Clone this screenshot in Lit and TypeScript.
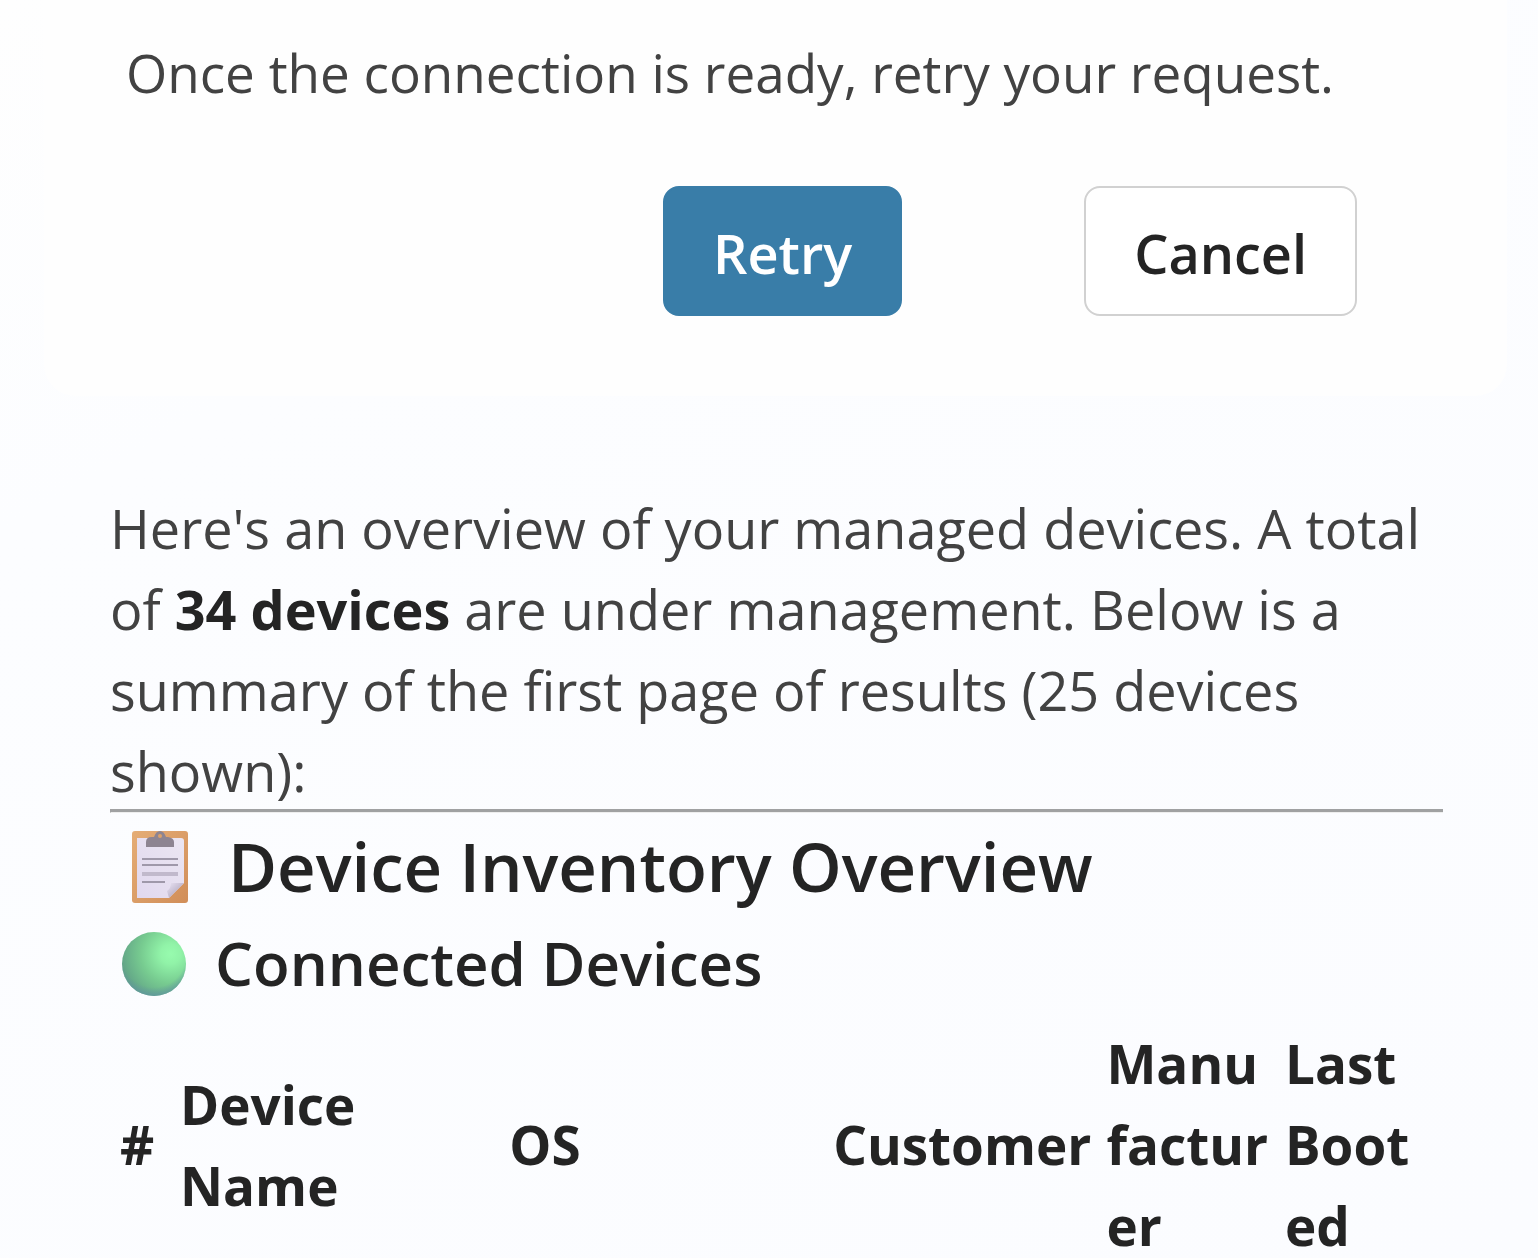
import { LitElement, html, css, svg } from "lit";
import { customElement } from "lit/decorators.js";

const clipboard = svg`
  <defs>
    <linearGradient id="board" x1="0" y1="0" x2="1" y2="1">
      <stop offset="0" stop-color="#e5ad76"/><stop offset="1" stop-color="#d18e59"/>
    </linearGradient>
    <linearGradient id="sheet" x1="1" y1="0" x2="0" y2="1">
      <stop offset="0" stop-color="#ebe6f2"/><stop offset="1" stop-color="#e1d8ef"/>
    </linearGradient>
    <linearGradient id="fold" x1="0.1" y1="0.1" x2="0.6" y2="0.6">
      <stop offset="0" stop-color="#e3dcee"/><stop offset="1" stop-color="#bdb4ca"/>
    </linearGradient>
  </defs>
  <rect x="0" y="0" width="56" height="72" rx="3" fill="url(#board)"/>
  <path d="M5 7H49Q52 7 52 10V52L37 67H5Z" fill="url(#sheet)"/>
  <path d="M35 60Q39 57 39 52H52L37 67Z" fill="url(#fold)"/>
  <path d="M14 16V11Q14 6 20 6H22Q24 0 28 0Q32 0 34 6H36Q42 7 42 11V16Z" fill="#8d8491"/>
  <circle cx="28" cy="5" r="2" fill="#dba069"/>
  <path d="M10 28H46M10 34H46M10 51H33" stroke="#9f98aa" stroke-width="2"/>
  <path d="M10 43H46" stroke="#c1b9cc" stroke-width="4"/>
`;

const greenBall = svg`
  <defs>
    <radialGradient id="ball" cx="0.76" cy="0.34" r="0.78">
      <stop offset="0" stop-color="#97fbae"/><stop offset="0.2" stop-color="#91f3a8"/>
      <stop offset="0.6" stop-color="#77cb90"/><stop offset="1" stop-color="#62a487"/>
    </radialGradient>
    <radialGradient id="shade" cx="0.5" cy="0.36" r="0.66">
      <stop offset="0.76" stop-color="#6095a0" stop-opacity="0"/>
      <stop offset="1" stop-color="#6095a0" stop-opacity="0.9"/>
    </radialGradient>
  </defs>
  <circle cx="32" cy="32" r="32" fill="url(#ball)"/>
  <circle cx="32" cy="32" r="32" fill="url(#shade)"/>
`;

@customElement("app-root")
export class AppRoot extends LitElement {
  static styles = css`
    :host {
      display: block;
      box-sizing: border-box;
      height: 100vh;
      overflow: hidden;
      background: linear-gradient(150deg, #fefefe 0%, #fcfdff 25%, #fbfcff 100%);
      color: #242424;
      font-family: "Open Sans", "Noto Sans", sans-serif;
      font-size: 54px;
      line-height: 81px;
    }
    * { box-sizing: border-box; }
    p, h2, h3 { margin: 0; }
    .card {
      margin: 0 31px 0 44px;
      padding: 32px 150px 80px 82px;
      background: #fefefe;
      border-radius: 0 0 32px 32px;
    }
    .note { color: #424242; font-size: 53px; white-space: nowrap; }
    .actions {
      display: flex;
      justify-content: flex-end;
      gap: 182px;
      margin-top: 73px;
    }
    button {
      height: 130px;
      padding: 4px 48px 0;
      border: 2px solid #d1d1d1;
      border-radius: 16px;
      background: #ffffff;
      color: #242424;
      font: inherit;
      font-weight: 600;
    }
    .primary {
      background: #397da8;
      border-color: #397da8;
      color: #ffffff;
    }
    .message { padding: 92px 95px 0 110px; }
    .summary { margin-bottom: -3px; color: #424242; }
    .summary strong { color: #242424; font-weight: 700; }
    hr {
      margin: 0;
      height: 4px;
      border: 0;
      border-top: 3px solid #a0a1a2;
      border-left: 1px solid #a0a1a2;
      border-bottom: 1px solid #eeeeee;
    }
    h2, h3 { display: flex; align-items: center; font-weight: 600; white-space: nowrap; }
    h2 { gap: 40px; padding-left: 22px; font-size: 67px; line-height: 107px; }
    h3 { gap: 29px; padding-left: 12px; font-size: 60px; line-height: 87px; }
    svg { display: block; flex: none; }
    .clip { width: 56px; height: 72px; }
    .ball { width: 64px; height: 64px; }
    table {
      width: 100%;
      margin-top: 16px;
      border-collapse: collapse;
      table-layout: fixed;
      font-size: 53px;
    }
    th {
      padding: 0 0 0 10px;
      text-align: left;
      vertical-align: middle;
      font-weight: 700;
    }
    .c-num { width: 4.5%; }
    .c-name { width: 24.7%; }
    .c-os { width: 24.3%; }
    .c-cust { width: 20.5%; }
    .c-manu { width: 13.4%; }
    .c-boot { width: 12.6%; }
  `;

  render() {
    return html`
      <section class="card">
        <p class="note">Once the connection is ready, retry your request.</p>
        <div class="actions">
          <button class="primary" type="button">Retry</button>
          <button type="button">Cancel</button>
        </div>
      </section>
      <article class="message">
        <p class="summary">
          Here's an overview of your managed devices. A total of
          <strong>34 devices</strong> are under management. Below is a summary
          of the first page of results (25 devices shown):
        </p>
        <hr />
        <h2><svg class="clip" viewBox="0 0 56 72" aria-hidden="true">${clipboard}</svg>Device Inventory Overview</h2>
        <h3><svg class="ball" viewBox="0 0 64 64" aria-hidden="true">${greenBall}</svg>Connected Devices</h3>
        <table>
          <thead>
            <tr>
              <th class="c-num" scope="col">#</th>
              <th class="c-name" scope="col">Device<br />Name</th>
              <th class="c-os" scope="col">OS</th>
              <th class="c-cust" scope="col">Customer</th>
              <th class="c-manu" scope="col">Manu<wbr />factur<wbr />er</th>
              <th class="c-boot" scope="col">Last Boot<wbr />ed</th>
            </tr>
          </thead>
        </table>
      </article>
    `;
  }
}
